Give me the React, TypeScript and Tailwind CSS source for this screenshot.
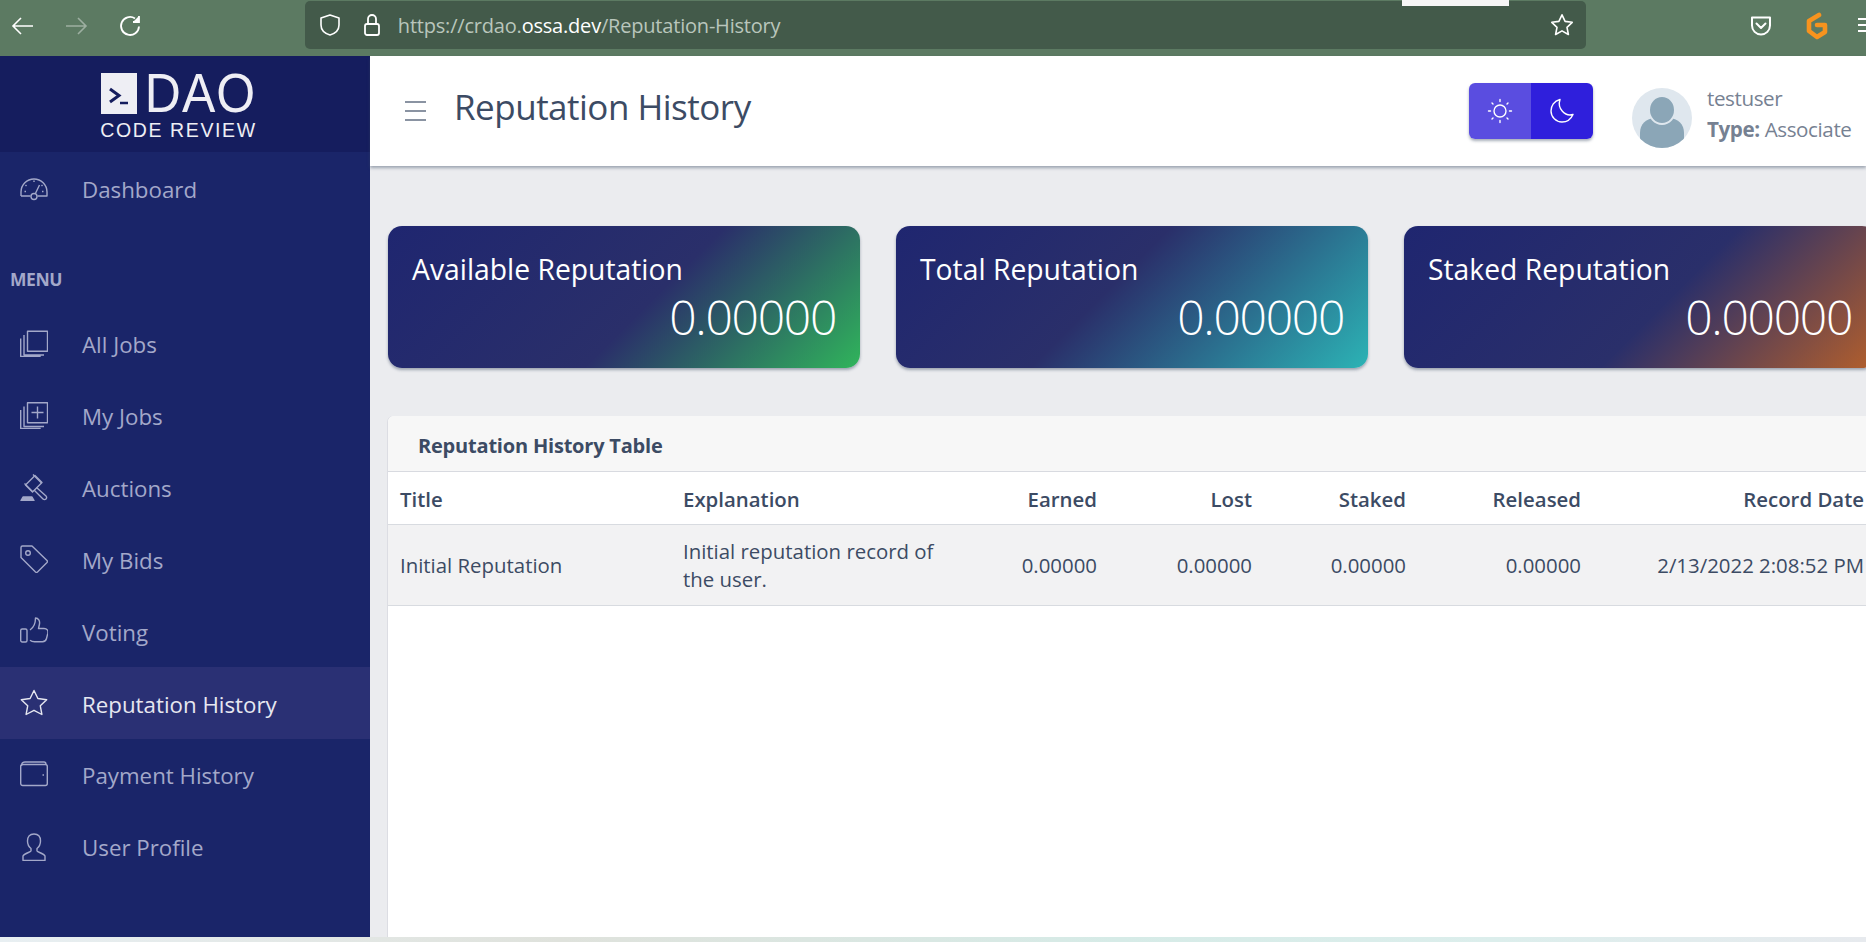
import React from "react";

const NavIcons: Record<string, React.ReactNode> = {
  speedometer: (
    <>
      <path d="M1 22v-4a13 13 0 0 1 26 0v4h-9.5M1 22h9.5" />
      <circle cx="14" cy="22.5" r="3" />
      <path d="M15.3 19.8 19.5 11M14 6.5v1.5M5.5 11l1 1M22.5 11l-1 1M4.5 17.5h1.5M22 17.5h1.5" />
    </>
  ),
  library: (
    <g transform="translate(0 1.5)">
      <rect x="7.5" y="0.7" width="20" height="20" />
      <path d="M4 4.5v20h20M0.7 8v18h20" />
    </g>
  ),
  libraryAdd: (
    <g transform="translate(0 1)">
      <rect x="7.5" y="0.7" width="20" height="20" />
      <path d="M4 4.5v20h20M0.7 8v18.500h20M17.5 4.5v12M11.5 10.5h12" />
    </g>
  ),
  gavel: (
    <>
      <path d="M5.5 12 15 2.5l7 7-9.5 9.5z" />
      <path d="M13 1.5l8.5 8.5M4.5 10.5l8.5 8.5" />
      <path d="M16.5 14.5 26 23a2 2 0 0 1-3 3l-9-9" />
      <path d="M1 27.5l2-3.5h9l2 3.5z" fill="currentColor" />
    </>
  ),
  tag: (
    <>
      <path d="M1 2.5A1.5 1.5 0 0 1 2.5 1h9.5l15 14.5a1.5 1.5 0 0 1 0 2L17.5 27a1.5 1.5 0 0 1-2 0L1 12.5z" />
      <circle cx="8" cy="8" r="2.3" />
    </>
  ),
  thumb: (
    <>
      <rect x="0.7" y="12" width="6.3" height="13" rx="1.5" />
      <path d="M10 13c3-2 5.500-6 5.500-12 3 0 4.500 3 4 6l-1 4.500h5.500c3 0 4.500 2 3.800 5l-1.300 5c-.5 2-2 3.200-4 3.200h-8c-2 0-3.500-.7-4.500-1.500" />
    </>
  ),
  star: <path d="M14 1.500l3.900 8 8.800 1.200-6.400 6.100 1.600 8.700L14 21.300l-7.900 4.200 1.600-8.700-6.400-6.100 8.800-1.200z" />,
  wallet: (
    <>
      <rect x="0.7" y="3.500" width="26.600" height="21" rx="2" />
      <path d="M1.500 5c0-3 1.500-4 3.500-4h19c1.500 0 2 1 2 2.500" />
      <path d="M22.500 14h1.500" />
    </>
  ),
  user: (
    <path d="M14 1c-4.500 0-6.500 3-6.500 7 0 3.500 1.500 6 3.500 7.500v2.500c0 1-7 2.500-8 5v4.500h22V23c-1-2.500-8-4-8-5v-2.500c2-1.500 3.500-4 3.500-7.500 0-4-2-7-6.500-7z" />
  ),
};

const NavItem = ({ icon, label, active }: { icon: string; label: string; active?: boolean }) => (
  <a
    className={
      active
        ? "flex h-[71.875px] items-center bg-[#2a3074] pl-5 text-[22.3px] text-[#e6e7f0]"
        : "flex h-[71.875px] items-center pl-5 text-[22.3px] text-[#a3a8c9]"
    }
  >
    <svg className="h-7 w-7 shrink-0" viewBox="0 0 28 28" fill="none" stroke="currentColor" strokeWidth={1.4} strokeLinejoin="round">
      {NavIcons[icon]}
    </svg>
    <span className="ml-[34px] pt-[3px]">{label}</span>
  </a>
);

const StatCard = ({ title, gradient }: { title: string; gradient: string }) => (
  <div className={`h-[142px] w-[472px] shrink-0 rounded-[14px] px-6 pt-[25px] text-white shadow-[0_2px_3px_rgba(60,75,100,0.45)] ${gradient}`}>
    <div className="text-[28.3px] leading-[36px]">{title}</div>
    <div className="mt-[-1px] text-right text-[48px] font-[350] leading-[62px] tracking-[-1.3px]">0.00000</div>
  </div>
);

const thRight = "px-3 pt-[3px] text-right font-semibold";
const tdRight = "px-3 pt-[2px] text-right";

export default function App() {
  return (
    <div className="flex h-[942px] w-[1866px] flex-col overflow-hidden bg-white font-['Open_Sans',sans-serif] text-[#3c4b64]">
      {/* browser chrome */}
      <div className="relative flex h-[56px] shrink-0 items-start bg-[#5c7a62] text-white">
        <div className="flex h-[52px] w-[305px] items-center pl-[11px]">
          <svg className="h-6 w-6" viewBox="0 0 24 24" fill="none" stroke="currentColor" strokeWidth={1.6}>
            <path d="M22 12H2M10 4l-8 8 8 8" />
          </svg>
          <svg className="ml-[29px] h-6 w-6 opacity-40" viewBox="0 0 24 24" fill="none" stroke="currentColor" strokeWidth={1.6}>
            <path d="M2 12h20M14 4l8 8-8 8" />
          </svg>
          <svg className="ml-[31px] h-6 w-6" viewBox="0 0 24 24" fill="none" stroke="currentColor" strokeWidth={1.8}>
            <path d="M20 12.500a9 9 0 1 1-4-8" />
            <path d="M20 2v6h-6" fill="currentColor" />
          </svg>
        </div>
        <div className="mt-px flex h-[48px] w-[1282px] items-center rounded-[5px] bg-[#435a4a]">
          <svg className="ml-[13px] h-6 w-6" viewBox="0 0 24 24" fill="none" stroke="currentColor" strokeWidth={1.6} strokeLinejoin="round">
            <path d="M12 2l9 3v7c0 5-4 8.500-9 10-5-1.500-9-5-9-10V5z" />
          </svg>
          <svg className="ml-[18px] h-6 w-6" viewBox="0 0 24 24" fill="none" stroke="currentColor" strokeWidth={1.8}>
            <rect x="5" y="11" width="14" height="11" rx="2" />
            <path d="M8 11V6a4 4 0 0 1 8 0v5" />
          </svg>
          <span className="ml-[14px] mt-[2px] text-[20px] tracking-[-0.2px] text-[#b9c6bc]">
            https://crdao.<span className="text-white">ossa.dev</span>/Reputation-History
          </span>
          <svg className="ml-auto mr-[12px] h-6 w-6" viewBox="0 0 24 24" fill="none" stroke="currentColor" strokeWidth={1.6} strokeLinejoin="round">
            <path d="M12 1.800l3.100 6.600 7.100.9-5.200 5 1.400 7.200-6.400-3.600-6.400 3.600 1.400-7.200-5.200-5 7.100-.9z" />
          </svg>
        </div>
        <svg className="ml-[163px] mt-[14px] h-6 w-6" viewBox="0 0 24 24" fill="none" stroke="currentColor" strokeWidth={2} strokeLinejoin="round" strokeLinecap="round">
          <path d="M3 3.500h18v8a9 9 0 0 1-18 0zM7.500 9.500l4.500 4.500 4.500-4.500" />
        </svg>
        <svg className="ml-[30px] mt-[12px] h-7 w-7" viewBox="0 0 28 28" fill="none" stroke="#f7931e" strokeWidth={4.6} strokeLinejoin="round" strokeLinecap="round">
          <path d="M16 3 6 9v10l8 6 8-5v-7h-8" />
        </svg>
        <div className="ml-[27px] mt-[18px] flex w-2 flex-col gap-[4px]">
          <div className="h-[2px] bg-white" />
          <div className="h-[2px] bg-white" />
          <div className="h-[2px] bg-white" />
        </div>
        <div className="absolute left-[1402px] top-0 h-[6px] w-[107px] bg-[#f6f6f6]" />
      </div>

      <div className="flex min-h-0 flex-1">
        {/* sidebar */}
        <aside className="w-[370px] shrink-0 bg-[#1a2569]">
          <div className="flex h-[96px] flex-col items-center bg-[#151d5e] pr-[13px] pt-[17px] text-[#eeeef4]">
            <div className="flex h-[41px] items-center">
              <svg className="h-[41px] w-[36px]" viewBox="0 0 36 41">
                <rect width="36" height="41" fill="#eeeef4" />
                <path d="M9 16l9 6.500-9 6.500" fill="none" stroke="#151d5e" strokeWidth={3} />
                <path d="M19 30h8" stroke="#151d5e" strokeWidth={2.500} />
              </svg>
              <span className="ml-[8px] h-[41px] origin-center scale-y-[1.12] font-['Liberation_Sans',sans-serif] text-[50px] leading-[41px] tracking-[1px]">DAO</span>
            </div>
            <div className="mt-[7px] font-['Liberation_Sans',sans-serif] text-[19.500px] leading-[18px] tracking-[1.6px]">CODE REVIEW</div>
          </div>
          <NavItem icon="speedometer" label="Dashboard" />
          <div className="flex h-[83.600px] items-start pl-[10px] pt-[43px] text-[17.500px] font-bold leading-6 tracking-[-0.4px] text-[#a3a8c9]">MENU</div>
          <NavItem icon="library" label="All Jobs" />
          <NavItem icon="libraryAdd" label="My Jobs" />
          <NavItem icon="gavel" label="Auctions" />
          <NavItem icon="tag" label="My Bids" />
          <NavItem icon="thumb" label="Voting" />
          <NavItem icon="star" label="Reputation History" active />
          <NavItem icon="wallet" label="Payment History" />
          <NavItem icon="user" label="User Profile" />
        </aside>

        {/* main */}
        <main className="flex min-w-0 flex-1 flex-col bg-[#ebecef]">
          <header className="relative z-10 flex h-[110px] shrink-0 items-center bg-white pl-[35px] shadow-[0_2px_3px_rgba(60,75,100,0.45)]">
            <div className="flex w-[21px] flex-col gap-[7px]">
              <div className="h-[2px] bg-[#8a93a2]" />
              <div className="h-[2px] bg-[#8a93a2]" />
              <div className="h-[2px] bg-[#8a93a2]" />
            </div>
            <h1 className="mb-[7px] ml-[28px] text-[35px] tracking-[-0.5px]">Reputation History</h1>
            <div className="ml-auto flex h-[56px] overflow-hidden rounded-[6px] shadow-[0_2px_3px_rgba(60,75,100,0.45)]">
              <div className="flex w-[62px] items-center justify-center bg-[#5a4de0] text-white">
                <svg className="h-[26px] w-[26px]" viewBox="0 0 26 26" fill="none" stroke="currentColor" strokeWidth={1.400} strokeLinecap="round">
                  <circle cx="13" cy="13" r="6" />
                  <path d="M13 1.500v2M13 22.500v2M1.500 13h2M22.500 13h2M5 5l1 1M20 20l1 1M21 5l-1 1M6 20l-1 1" />
                </svg>
              </div>
              <div className="flex w-[62px] items-center justify-center bg-[#2f1fdc] text-white">
                <svg className="h-[26px] w-[26px]" viewBox="0 0 26 26" fill="none" stroke="currentColor" strokeWidth={1.400} strokeLinejoin="round">
                  <path d="M11 1.500C5 3 2 8 2 13c0 6 5 11 11 11 5 0 9-3 11-7.500-8 2.500-16-6-13-15z" />
                </svg>
              </div>
            </div>
            <div className="ml-[39px] mt-[14px] h-[60px] w-[60px] shrink-0 overflow-hidden rounded-full bg-[#dfe7ee]">
              <svg className="h-[60px] w-[60px]" viewBox="0 0 60 60" fill="#8ba6b7">
                <path d="M8 60V45c0-9 6-14 14-15h16c8 1 14 6 14 15v15z" />
                <ellipse cx="30" cy="22" rx="13" ry="14" stroke="#dfe7ee" strokeWidth={2} />
              </svg>
            </div>
            <div className="ml-[15px] mt-[6px] w-[159px] shrink-0 text-[20.6px] leading-[31px] tracking-[-0.4px] text-[#768192]">
              <div>testuser</div>
              <div className="whitespace-nowrap">
                <b>Type:</b> Associate
              </div>
            </div>
          </header>

          <div className="min-h-0 flex-1 overflow-hidden pl-[18px] pt-[60px]">
            <div className="flex gap-9">
              <StatCard title="Available Reputation" gradient="bg-[linear-gradient(135deg,#1f2670_0%,#2a2f6a_55%,#30b45b_100%)]" />
              <StatCard title="Total Reputation" gradient="bg-[linear-gradient(135deg,#1f2670_0%,#2a2f6a_45%,#2cb3b5_100%)]" />
              <StatCard title="Staked Reputation" gradient="bg-[linear-gradient(135deg,#1f2670_0%,#2a2f6a_55%,#b35f2c_100%)]" />
            </div>

            <div className="mt-12 h-[600px] w-[1500px] overflow-hidden rounded-t-[6px] bg-white shadow-[-1px_0_0_#dcdde3]">
              <div className="flex h-[56px] items-center border-b border-[#d8dae0] bg-[#f7f7f7] pl-[30px] pt-[5px] text-[20px] font-bold tracking-[-0.2px]">
                Reputation History Table
              </div>
              <table className="w-[1488px] table-fixed border-collapse text-[20.4px]">
                <colgroup>
                  <col className="w-[283px]" />
                  <col className="w-[280px]" />
                  <col className="w-[158px]" />
                  <col className="w-[155px]" />
                  <col className="w-[154px]" />
                  <col className="w-[175px]" />
                  <col className="w-[283px]" />
                </colgroup>
                <thead>
                  <tr className="h-[52px] border-b border-[#d8dbe0]">
                    <th className="px-3 pt-[3px] text-left font-semibold">Title</th>
                    <th className="px-3 pt-[3px] text-left font-semibold">Explanation</th>
                    <th className={thRight}>Earned</th>
                    <th className={thRight}>Lost</th>
                    <th className={thRight}>Staked</th>
                    <th className={thRight}>Released</th>
                    <th className={thRight}>Record Date</th>
                  </tr>
                </thead>
                <tbody>
                  <tr className="h-[81px] border-b border-[#d8dbe0] bg-[#f2f2f3]">
                    <td className="px-3 pt-[2px]">Initial Reputation</td>
                    <td className="px-3 leading-[28px]">Initial reputation record of the user.</td>
                    <td className={tdRight}>0.00000</td>
                    <td className={tdRight}>0.00000</td>
                    <td className={tdRight}>0.00000</td>
                    <td className={tdRight}>0.00000</td>
                    <td className={tdRight}>2/13/2022 2:08:52 PM</td>
                  </tr>
                </tbody>
              </table>
            </div>
          </div>
        </main>
      </div>

      <div className="h-[5px] shrink-0 bg-[linear-gradient(90deg,#e8eff2,#dfe2dc_30%,#d6ebe7_60%,#dceeec_80%,#e7eaee)]" />
    </div>
  );
}
